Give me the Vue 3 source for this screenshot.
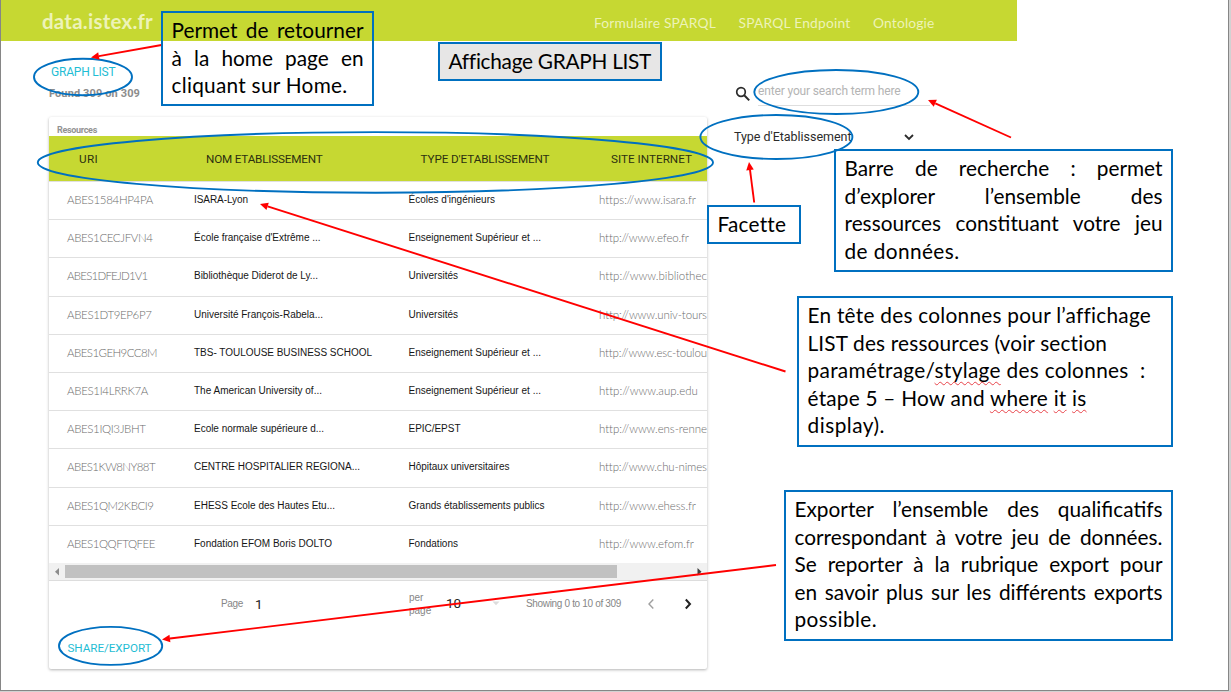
<script setup>
// Spreads letters so that a label takes exactly the given width.
const vFit = {
  mounted(el, { value }) {
    if (!value) return
    const natural = el.getBoundingClientRect().width
    el.style.letterSpacing = `${(value - natural) / el.textContent.length}px`
  },
}

const nav = [
  { text: 'Formulaire SPARQL', w: 122 },
  { text: 'SPARQL Endpoint', w: 112 },
  { text: 'Ontologie', w: 61.5 },
]

const columns = [
  { text: 'URI', w: 19 },
  { text: 'NOM ETABLISSEMENT', w: 116.5 },
  { text: "TYPE D'ETABLISSEMENT", w: 129 },
  { text: 'SITE INTERNET', w: 81 },
]

const rows = [
  [['ABES1584HP4PA', 86], ['ISARA-Lyon', 54], ["Écoles d'ingénieurs", 86.5], ['https://www.isara.fr', 96.5]],
  [['ABES1CECJFVN4', 85.5], ["École française d'Extrême ...", 126.5], ['Enseignement Supérieur et ...', 132.5], ['http://www.efeo.fr', 89.5]],
  [['ABES1DFEJD1V1', 80.5], ['Bibliothèque Diderot de Ly...', 124], ['Universités', 49.5], ['http://www.bibliothec', 107.5]],
  [['ABES1DT9EP6P7', 84.5], ['Université François-Rabela...', 129], ['Universités', 49.5], ['http://www.univ-tours', 107.5]],
  [['ABES1GEH9CC8M', 90], ['TBS- TOULOUSE BUSINESS SCHOOL', 178], ['Enseignement Supérieur et ...', 132.5], ['http://www.esc-toulou', 107.5]],
  [['ABES1I4LRRK7A', 81], ['The American University of...', 128], ['Enseignement Supérieur et ...', 132.5], ['http://www.aup.edu', 98.5]],
  [['ABES1IQI3JBHT', 78.5], ['Ecole normale supérieure d...', 130], ['EPIC/EPST', 52], ['http://www.ens-renne', 107.5]],
  [['ABES1KW8NY88T', 88], ['CENTRE HOSPITALIER REGIONA...', 166], ['Hôpitaux universitaires', 101], ['http://www.chu-nimes', 107.5]],
  [['ABES1QM2KBCI9', 86.5], ['EHESS Ecole des Hautes Etu...', 141], ['Grands établissements publics', 136], ['http://www.ehess.fr', 96.5]],
  [['ABES1QQFTQFEE', 88], ['Fondation EFOM Boris DOLTO', 138], ['Fondations', 49.5], ['http://www.efom.fr', 94.5]],
]

const arrows = [
  [161.5, 45, 91, 57.5],
  [1011, 137.5, 928, 100],
  [754.2, 202.5, 749, 162],
  [785.5, 371.5, 260, 204],
  [776, 565, 162, 639.5],
].map(([x1, y1, x2, y2]) => {
  const len = Math.hypot(x2 - x1, y2 - y1)
  const ux = (x2 - x1) / len
  const uy = (y2 - y1) / len
  const bx = x2 - ux * 8
  const by = y2 - uy * 8
  return {
    x1, y1, bx, by,
    head: `${x2},${y2} ${bx - uy * 3.8},${by + ux * 3.8} ${bx + uy * 3.8},${by - ux * 3.8}`,
  }
})

const ellipses = [
  [83, 77, 49, 18.2],
  [375.4, 162.4, 337.6, 30.3],
  [836.3, 92, 82, 22],
  [776.4, 137, 76, 22],
  [110.6, 645.9, 51.6, 19],
]

// j marks a line stretched over the whole box width.
const notes = [
  { name: 'home', lines: [{ t: 'Permet de retourner', j: 1 }, { t: 'à la home page en', j: 1 }, { t: 'cliquant sur Home.', w: 176 }] },
  { name: 'title', lines: [{ t: 'Affichage GRAPH LIST', w: 201.5 }] },
  { name: 'facet', lines: [{ t: 'Facette', w: 68 }] },
  { name: 'search', lines: [{ t: 'Barre de recherche : permet', j: 1 }, { t: 'd’explorer l’ensemble des', j: 1 }, { t: 'ressources constituant votre jeu', j: 1 }, { t: 'de données.', w: 115 }] },
  { name: 'columns', lines: [
    { t: 'En tête des colonnes pour l’affichage', w: 342.5 },
    { t: 'LIST des ressources (voir section', w: 300 },
    { parts: [['paramétrage/'], ['stylage', 1], [' des colonnes\u00a0 :']], w: 338 },
    { parts: [['étape 5 – How and '], ['where', 1], [' '], ['it', 1], [' '], ['is', 1]], w: 279 },
    { t: 'display).', w: 77.5 },
  ] },
  { name: 'export', lines: [{ t: 'Exporter l’ensemble des qualificatifs', j: 1 }, { t: 'correspondant à votre jeu de données.', j: 1 }, { t: 'Se reporter à la rubrique export pour', j: 1 }, { t: 'en savoir plus sur les différents exports', j: 1 }, { t: 'possible.', w: 82.5 }] },
]
</script>

<template>
  <div class="slide">
    <header class="bar">
      <span v-fit="111" class="logo">data.istex.fr</span>
      <nav>
        <span v-for="n in nav" :key="n.text" v-fit="n.w">{{ n.text }}</span>
      </nav>
    </header>

    <main>
      <section class="left">
        <div class="crumb"><span v-fit="64.5">GRAPH LIST</span></div>
        <div class="found"><span v-fit="91">Found 309 on 309</span></div>
        <div class="card">
          <div class="caption"><span v-fit="40">Resources</span></div>
          <div class="grid head">
            <div v-for="c in columns" :key="c.text"><span v-fit="c.w">{{ c.text }}</span></div>
          </div>
          <div v-for="r in rows" :key="r[0][0]" class="grid row">
            <div v-for="(c, i) in r" :key="i" :class="{ thin: i === 0 || i === 3 }">
              <span v-fit="c[1]">{{ c[0] }}</span>
            </div>
          </div>
          <div class="scroll">
            <svg width="16" height="17" viewBox="0 0 16 17"><path d="M10 5v7.5L6 8.7z" fill="#8c8c8c" /></svg>
            <div class="thumb"></div>
            <svg width="16" height="17" viewBox="0 0 16 17"><path d="M6.5 5v7.5l4-3.8z" fill="#404040" /></svg>
          </div>
          <div class="pager">
            <span v-fit="22" class="page">Page</span>
            <span class="num">1</span>
            <span class="per">per<br />page</span>
            <span class="num ten">10</span>
            <svg class="tri" width="8" height="5" viewBox="0 0 8 5"><path d="M0.5 0.5h7L4 4.2z" fill="#dcdcdc" /></svg>
            <span v-fit="95" class="showing">Showing 0 to 10 of 309</span>
            <svg class="prev" width="8" height="12" viewBox="0 0 8 12"><path d="M6.3 1.5 2 6l4.3 4.5" fill="none" stroke="#a0a0a0" stroke-width="1.4" /></svg>
            <svg class="next" width="8" height="12" viewBox="0 0 8 12"><path d="M1.8 1.5 6 6l-4.2 4.5" fill="none" stroke="#222" stroke-width="2" /></svg>
          </div>
          <div class="share"><span v-fit="84">SHARE/EXPORT</span></div>
        </div>
      </section>

      <aside>
        <div class="search">
          <svg width="16" height="16" viewBox="0 0 16 16" fill="none" stroke="#2b2b2b"><circle cx="6" cy="6" r="4.3" stroke-width="1.7" /><path d="m9.2 9.2 5 5.2" stroke-width="2" /></svg>
          <div class="field"><span v-fit="142.5">enter your search term here</span></div>
        </div>
        <div class="facet-row">
          <span v-fit="117.5">Type d'Etablissement</span>
          <svg width="10" height="7" viewBox="0 0 10 7"><path d="m1 1 4 4 4-4" fill="none" stroke="#2b2b2b" stroke-width="1.8" /></svg>
        </div>
      </aside>
    </main>

    <svg class="marks" width="1231" height="692" viewBox="0 0 1231 692">
      <g fill="none" stroke="#0070c0" stroke-width="1.9">
        <ellipse v-for="(e, i) in ellipses" :key="i" :cx="e[0]" :cy="e[1]" :rx="e[2]" :ry="e[3]" />
      </g>
      <g v-for="(a, i) in arrows" :key="i">
        <line :x1="a.x1" :y1="a.y1" :x2="a.bx" :y2="a.by" stroke="#f00" stroke-width="1.9" />
        <polygon :points="a.head" fill="#f00" />
      </g>
    </svg>

    <div v-for="n in notes" :key="n.name" class="note" :class="n.name">
      <div v-for="(l, i) in n.lines" :key="i" class="line" :class="{ wide: l.j }">
        <template v-if="l.j">{{ l.t }}</template>
        <span v-else-if="l.parts" v-fit="l.w"><span v-for="(p, k) in l.parts" :key="k" :class="{ typo: p[1] }">{{ p[0] }}</span></span>
        <span v-else v-fit="l.w">{{ l.t }}</span>
      </div>
    </div>
  </div>
</template>

<style>
body {
  margin: 0;
  background: #d2d2d2;
}
</style>

<style scoped>
.slide {
  position: relative;
  box-sizing: border-box;
  width: 1229px;
  height: 691px;
  background: #fff;
  border: 1px solid #868686;
  border-top: 0;
  font-family: Roboto, "Liberation Sans", sans-serif;
  white-space: nowrap;
}
span {
  white-space: pre;
}
.bar {
  display: flex;
  box-sizing: border-box;
  width: 1016px;
  height: 41px;
  padding: 0 82.5px 0 41px;
  align-items: center;
  justify-content: space-between;
  background: #c6d832;
  color: #edf3b8;
}
.logo {
  font: 700 20.5px/40px Lato, sans-serif;
}
nav {
  display: flex;
  gap: 22.5px;
  padding-top: 4px;
  font: 400 13.8px/20px Lato, sans-serif;
}
main {
  display: flex;
}
.left {
  width: 657.5px;
  padding-left: 48px;
}
.crumb {
  padding: 22px 0 0 2px;
  font-size: 12px;
  line-height: 18px;
  color: #1fbdd4;
}
.found {
  padding-top: 4px;
  font-size: 11px;
  font-weight: 700;
  line-height: 18px;
  color: #8c8c8c;
}
.card {
  height: 552px;
  margin-top: 14px;
  overflow: hidden;
  background: #fff;
  border-radius: 2px;
  box-shadow: 0 1px 3px rgba(0, 0, 0, 0.3);
}
.caption {
  height: 19px;
  padding-left: 8px;
  font-size: 9px;
  font-weight: 700;
  line-height: 27px;
  color: #929292;
}
.grid {
  display: grid;
  grid-template-columns: 127px 214.5px 190.5px 107.5px;
  padding-left: 18px;
}
.grid > div {
  min-width: 0;
}
.head {
  height: 45px;
  background: #c6d832;
  font-size: 11.7px;
  line-height: 46px;
  color: #2c3010;
}
.head > div {
  padding-left: 12px;
}
.row {
  box-sizing: border-box;
  height: 38.2px;
  border-top: 1px solid #e0e0e0;
  font-family: "Liberation Sans", sans-serif;
  font-size: 10px;
  line-height: 36px;
  color: #161616;
}
.row .thin {
  font-family: Lato, sans-serif;
  font-size: 11.5px;
  font-weight: 300;
  line-height: 35px;
  color: #6c6c6c;
}
.scroll {
  display: flex;
  box-sizing: border-box;
  height: 18px;
  align-items: center;
  background: #f1f1f1;
  border-bottom: 1px solid #ddd;
}
.scroll svg:last-child {
  margin-left: auto;
}
.thumb {
  width: 552px;
  height: 13px;
  background: #c1c1c1;
}
.pager {
  display: flex;
  height: 46px;
  align-items: center;
  padding-left: 172px;
  font-family: "Liberation Sans", sans-serif;
  font-size: 10px;
  color: #868686;
}
.num {
  width: 7px;
  margin-left: 12px;
  font-family: Roboto, sans-serif;
  font-size: 13.5px;
  color: #222;
}
.per {
  width: 23px;
  margin-left: 147px;
  padding-top: 1px;
  line-height: 13px;
}
.num.ten {
  width: 15px;
  margin: -2px 0 0 14px;
}
.tri {
  margin-left: 31px;
}
.showing {
  margin-left: 26px;
}
.prev {
  margin-left: 26px;
}
.next {
  margin-left: 28.5px;
}
.share {
  padding: 12px 0 0 18.5px;
  font-size: 11.7px;
  line-height: 18px;
  color: #1fbdd4;
}
aside {
  width: 200px;
  padding: 41px 0 0 27.5px;
}
.search {
  display: flex;
  gap: 7px;
}
.search svg {
  margin: 4px 0 0 1px;
}
.field {
  width: 172px;
  height: 23px;
  border-bottom: 1px solid #dedede;
  font-size: 12px;
  line-height: 19px;
  color: #b4b4b4;
}
.facet-row {
  display: flex;
  align-items: center;
  justify-content: space-between;
  width: 180px;
  margin-top: 21px;
  font-size: 12.5px;
  line-height: 20px;
  color: #2b2b2b;
}
.marks {
  position: absolute;
  top: 0;
  left: -1px;
}
.note {
  position: absolute;
  box-sizing: border-box;
  padding: 3px 8.5px;
  border: 2px solid #0070c0;
  font: 400 20.8px/27.5px Lato, sans-serif;
  color: #000;
}
.line {
  height: 27.5px;
}
.wide {
  white-space: normal;
  text-align-last: justify;
}
.typo {
  text-decoration: underline wavy #e8434a 1px;
  text-decoration-skip-ink: none;
  text-underline-offset: 3px;
}
.home { left: 160px; top: 11px; width: 213px; height: 95px; }
.title { left: 437px; top: 42px; width: 224px; height: 39px; background: #e7e6e6; }
.facet { left: 706px; top: 205px; width: 94px; height: 39px; }
.search.note { display: block; left: 833px; top: 149px; width: 339px; height: 123px; }
.columns { left: 796px; top: 296px; width: 376px; height: 151px; }
.export { left: 783px; top: 490px; width: 389px; height: 151px; }
</style>
